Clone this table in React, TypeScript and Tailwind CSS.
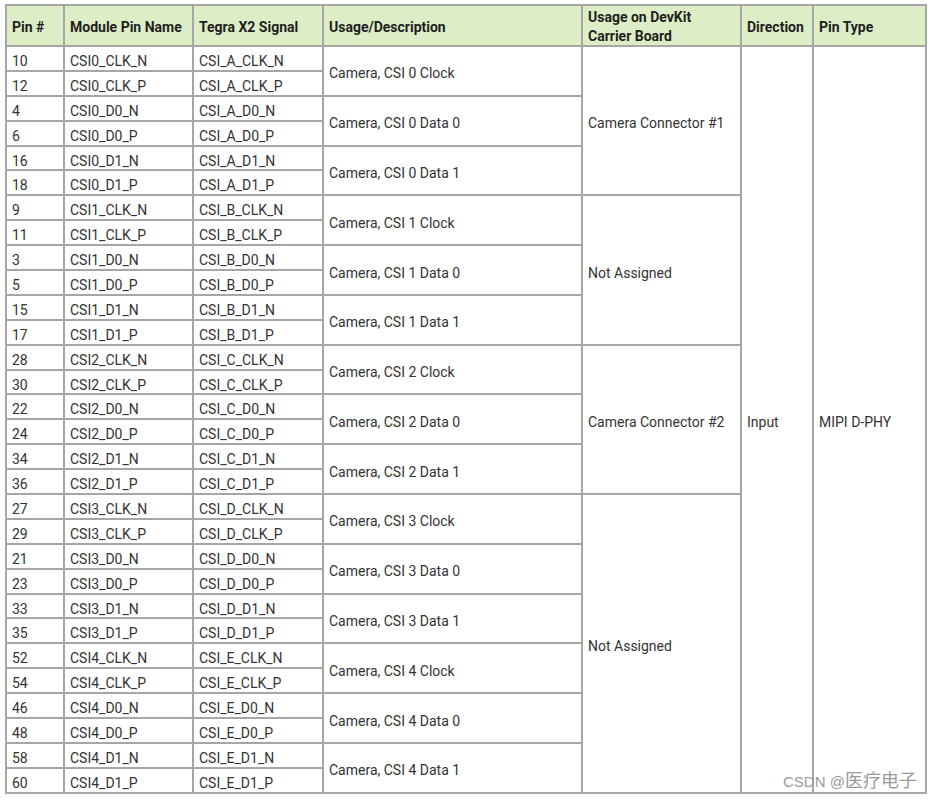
type Row = { pin: string; mod: string; sig: string };

const rows: Row[] = [
	{ pin: "10", mod: "CSI0_CLK_N", sig: "CSI_A_CLK_N" },
	{ pin: "12", mod: "CSI0_CLK_P", sig: "CSI_A_CLK_P" },
	{ pin: "4", mod: "CSI0_D0_N", sig: "CSI_A_D0_N" },
	{ pin: "6", mod: "CSI0_D0_P", sig: "CSI_A_D0_P" },
	{ pin: "16", mod: "CSI0_D1_N", sig: "CSI_A_D1_N" },
	{ pin: "18", mod: "CSI0_D1_P", sig: "CSI_A_D1_P" },
	{ pin: "9", mod: "CSI1_CLK_N", sig: "CSI_B_CLK_N" },
	{ pin: "11", mod: "CSI1_CLK_P", sig: "CSI_B_CLK_P" },
	{ pin: "3", mod: "CSI1_D0_N", sig: "CSI_B_D0_N" },
	{ pin: "5", mod: "CSI1_D0_P", sig: "CSI_B_D0_P" },
	{ pin: "15", mod: "CSI1_D1_N", sig: "CSI_B_D1_N" },
	{ pin: "17", mod: "CSI1_D1_P", sig: "CSI_B_D1_P" },
	{ pin: "28", mod: "CSI2_CLK_N", sig: "CSI_C_CLK_N" },
	{ pin: "30", mod: "CSI2_CLK_P", sig: "CSI_C_CLK_P" },
	{ pin: "22", mod: "CSI2_D0_N", sig: "CSI_C_D0_N" },
	{ pin: "24", mod: "CSI2_D0_P", sig: "CSI_C_D0_P" },
	{ pin: "34", mod: "CSI2_D1_N", sig: "CSI_C_D1_N" },
	{ pin: "36", mod: "CSI2_D1_P", sig: "CSI_C_D1_P" },
	{ pin: "27", mod: "CSI3_CLK_N", sig: "CSI_D_CLK_N" },
	{ pin: "29", mod: "CSI3_CLK_P", sig: "CSI_D_CLK_P" },
	{ pin: "21", mod: "CSI3_D0_N", sig: "CSI_D_D0_N" },
	{ pin: "23", mod: "CSI3_D0_P", sig: "CSI_D_D0_P" },
	{ pin: "33", mod: "CSI3_D1_N", sig: "CSI_D_D1_N" },
	{ pin: "35", mod: "CSI3_D1_P", sig: "CSI_D_D1_P" },
	{ pin: "52", mod: "CSI4_CLK_N", sig: "CSI_E_CLK_N" },
	{ pin: "54", mod: "CSI4_CLK_P", sig: "CSI_E_CLK_P" },
	{ pin: "46", mod: "CSI4_D0_N", sig: "CSI_E_D0_N" },
	{ pin: "48", mod: "CSI4_D0_P", sig: "CSI_E_D0_P" },
	{ pin: "58", mod: "CSI4_D1_N", sig: "CSI_E_D1_N" },
	{ pin: "60", mod: "CSI4_D1_P", sig: "CSI_E_D1_P" },
];

const usages = [
	"Camera, CSI 0 Clock",
	"Camera, CSI 0 Data 0",
	"Camera, CSI 0 Data 1",
	"Camera, CSI 1 Clock",
	"Camera, CSI 1 Data 0",
	"Camera, CSI 1 Data 1",
	"Camera, CSI 2 Clock",
	"Camera, CSI 2 Data 0",
	"Camera, CSI 2 Data 1",
	"Camera, CSI 3 Clock",
	"Camera, CSI 3 Data 0",
	"Camera, CSI 3 Data 1",
	"Camera, CSI 4 Clock",
	"Camera, CSI 4 Data 0",
	"Camera, CSI 4 Data 1",
];

// row start (1-based, header is row 1) and span for the carrier board column
const boards = [
	{ text: "Camera Connector #1", start: 2, span: 6 },
	{ text: "Not Assigned", start: 8, span: 6 },
	{ text: "Camera Connector #2", start: 14, span: 6 },
	{ text: "Not Assigned", start: 20, span: 12 },
];

const cell =
	"bg-white flex items-center px-[5px] pt-[5px] leading-[16px] text-[#333] whitespace-nowrap";
const head =
	"bg-[#ddeec6] flex items-center px-[5px] pt-[3px] font-bold text-[#1f1f1f] leading-[19px]";

export default function App() {
	return (
		<div className="relative w-[934px] h-[800px] bg-white pt-[4px] pl-[5px] font-['Roboto',sans-serif] text-[14px]">
			<div className="grid w-[922px] grid-cols-[56px_127px_128px_257px_157px_70px_111px] grid-rows-[39px_repeat(30,22.9px)] gap-[2px] bg-[#a6a6a6] p-[2px]">
				<div className={head}>Pin #</div>
				<div className={head}>Module Pin Name</div>
				<div className={head}>Tegra X2 Signal</div>
				<div className={head}>Usage/Description</div>
				<div className={head}>
					Usage on DevKit
					<br />
					Carrier Board
				</div>
				<div className={head}>Direction</div>
				<div className={head}>Pin Type</div>

				{rows.map((r, i) => (
					<div key={`p${r.pin}`} className={cell} style={{ gridRow: i + 2, gridColumn: 1 }}>
						{r.pin}
					</div>
				))}
				{rows.map((r, i) => (
					<div key={`m${r.pin}`} className={cell} style={{ gridRow: i + 2, gridColumn: 2 }}>
						{r.mod}
					</div>
				))}
				{rows.map((r, i) => (
					<div key={`s${r.pin}`} className={cell} style={{ gridRow: i + 2, gridColumn: 3 }}>
						{r.sig}
					</div>
				))}
				{usages.map((u, i) => (
					<div
						key={u}
						className={cell}
						style={{ gridRow: `${i * 2 + 2} / span 2`, gridColumn: 4 }}
					>
						{u}
					</div>
				))}
				{boards.map((b) => (
					<div
						key={b.start}
						className={cell}
						style={{ gridRow: `${b.start} / span ${b.span}`, gridColumn: 5 }}
					>
						{b.text}
					</div>
				))}
				<div className={`${cell} col-start-6 row-start-2 row-span-30`}>Input</div>
				<div className={`${cell} col-start-7 row-start-2 row-span-30`}>MIPI D-PHY</div>
			</div>

			<div className="absolute left-[783px] top-[770px] flex items-baseline leading-[22px] text-[#9a9a9a] font-['Liberation_Sans','Noto_Sans_CJK_SC',sans-serif]">
				<span className="text-[15px]">CSDN @</span>
				<span className="text-[18px]">医疗电子</span>
			</div>
		</div>
	);
}
